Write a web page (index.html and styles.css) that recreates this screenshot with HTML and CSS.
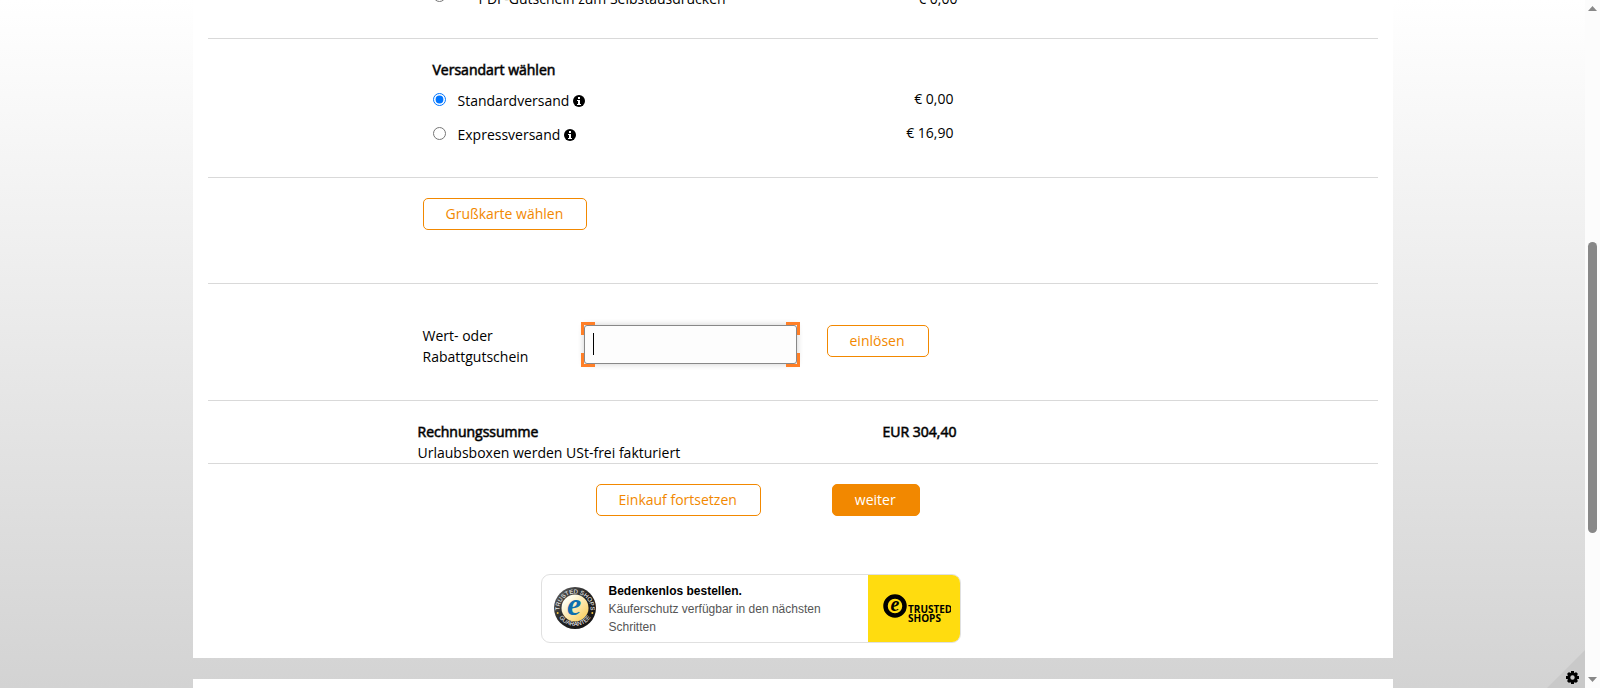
FILE: index.html
```html
<!DOCTYPE html>
<html lang="de">
<head>
  <meta charset="UTF-8">
  <meta name="viewport" content="width=device-width, initial-scale=1.0">
  <title>Warenkorb</title>
  <link rel="stylesheet" href="styles.css">
</head>
<body>
  <div class="window">
    <div class="view">
      <main class="page">
        <section class="section pdf">
          <div class="option indent">
            <input type="radio" id="pdf" name="product">
            <label for="pdf">PDF-Gutschein zum Selbstausdrucken</label>
            <span class="price">€ 0,00</span>
          </div>
        </section>

        <section class="section shipping">
          <h2>Versandart wählen</h2>
          <div class="option">
            <input type="radio" id="standard" name="shipping" checked>
            <label for="standard">Standardversand
              <svg class="info" viewBox="0 0 12 12"><circle cx="6" cy="6" r="6"/><path d="M4 5h3v4h1v1H4V9h1V6H4zM5 2h2v2H5z" fill="#fff"/></svg>
            </label>
            <span class="price">€ 0,00</span>
          </div>
          <div class="option">
            <input type="radio" id="express" name="shipping">
            <label for="express">Expressversand
              <svg class="info" viewBox="0 0 12 12"><circle cx="6" cy="6" r="6"/><path d="M4 5h3v4h1v1H4V9h1V6H4zM5 2h2v2H5z" fill="#fff"/></svg>
            </label>
            <span class="price">€ 16,90</span>
          </div>
        </section>

        <section class="section card">
          <button type="button" class="btn">Grußkarte wählen</button>
        </section>

        <section class="section voucher">
          <label for="code">Wert- oder Rabattgutschein</label>
          <div class="field">
            <input type="text" id="code" autofocus>
            <span class="caret"></span>
            <svg class="corners" viewBox="0 0 219 45" fill="none" stroke="#ff7f27" stroke-width="3"><path d="M1.500 13V1.500H14M205 1.500H217.500V13M1.500 31V43.500H14M205 43.500H217.500V31"/></svg>
          </div>
          <button type="button" class="btn">einlösen</button>
        </section>

        <section class="section total">
          <div>
            <strong>Rechnungssumme</strong>
            <p>Urlaubsboxen werden USt-frei fakturiert</p>
          </div>
          <strong>EUR 304,40</strong>
        </section>

        <div class="actions">
          <button type="button" class="btn">Einkauf fortsetzen</button>
          <button type="submit" class="btn primary">weiter</button>
        </div>

        <div class="trusted">
          <svg class="seal" viewBox="0 0 42 42">
            <defs>
              <linearGradient id="ring" x1="0" y1="0" x2="1" y2="1"><stop offset="0" stop-color="#666"/><stop offset=".5" stop-color="#222"/><stop offset="1" stop-color="#111"/></linearGradient>
              <linearGradient id="gold" x1="0" y1="0" x2="1" y2="1"><stop offset=".2" stop-color="#fffdf0"/><stop offset="1" stop-color="#f8c84a"/></linearGradient>
              <path id="upper" d="M5.800 25A15.500 15.500 0 1 1 36.200 25"/>
              <path id="lower" d="M3.500 27A18.800 18.800 0 0 0 38.500 27"/>
            </defs>
            <circle cx="21" cy="21" r="21" fill="url(#ring)"/>
            <circle cx="21" cy="21" r="13.500" fill="url(#gold)"/>
            <text class="seal-text" text-anchor="middle"><textPath href="#upper" startOffset="50%">TRUSTED SHOPS</textPath></text>
            <text class="seal-text" text-anchor="middle"><textPath href="#lower" startOffset="50%">GUARANTEE</textPath></text>
            <circle cx="3.700" cy="26" r="1" fill="#f3c545"/>
            <circle cx="38.300" cy="26" r="1" fill="#f3c545"/>
            <text class="seal-e" x="20" y="28" text-anchor="middle">e</text>
          </svg>
          <div class="trusted-text">
            <strong>Bedenkenlos bestellen.</strong>
            <p>Käuferschutz verfügbar in den nächsten Schritten</p>
          </div>
          <div class="trusted-logo">
            <svg viewBox="0 0 68 30">
              <circle cx="12" cy="12" r="9.500" fill="none" stroke="#000" stroke-width="4.500"/>
              <text class="logo-e" x="12" y="17" text-anchor="middle">e</text>
              <text class="logo-text" x="25" y="19">TRUSTED</text>
              <text class="logo-text" x="25" y="28">SHOPS</text>
            </svg>
          </div>
        </div>
      </main>
      <footer class="footer"></footer>
      <button type="button" class="settings" aria-label="Einstellungen">
        <svg viewBox="0 0 38 38">
          <path d="M38 0V38H0z" fill="#c9c9c9"/>
          <g transform="translate(25.500 27.500)">
            <circle r="3.700" fill="none" stroke="#000" stroke-width="3"/>
            <path d="M0-6.500V-4M0 6.500V4M-6.500 0H-4M6.500 0H4M-4.500-4.500l1.500 1.500M4.500 4.500L3 3M-4.500 4.500L-3 3M4.500-4.500L3-3" stroke="#000" stroke-width="3"/>
          </g>
        </svg>
      </button>
    </div>
    <div class="scrollbar">
      <svg viewBox="0 0 9 5"><path d="M4.500 0L9 5H0z"/></svg>
      <div class="track"><div class="thumb"></div></div>
      <svg viewBox="0 0 9 5"><path d="M0 0H9L4.500 5z"/></svg>
    </div>
  </div>
</body>
</html>
```
FILE: styles.css
```css
* {
  box-sizing: border-box;
}

body {
  margin: 0;
  font-family: "Open Sans", sans-serif;
  font-size: 14px;
  line-height: 21px;
  color: #000;
}

h2,
p {
  margin: 0;
}

h2 {
  font-size: 14px;
}

h2,
.total strong {
  font-weight: 400;
  -webkit-text-stroke: 1px rgba(0, 0, 0, 0.6);
}

.window {
  display: flex;
  height: 100vh;
  overflow: hidden;
}

.view {
  position: relative;
  flex: 1;
  overflow: hidden;
  background: linear-gradient(#fff, #d3d3d3);
}

/* the view is scrolled down into the order form */
.page {
  max-width: 1200px;
  margin: -12px auto 0;
  padding: 0 15px 15px;
  background: #fff;
}

.section {
  padding-left: 210px;
  border-bottom: 1px solid #d9d9d9;
}

.pdf {
  padding-bottom: 29px;
}

.shipping {
  padding-top: 20px;
  padding-bottom: 21px;
}

.shipping h2 {
  margin-bottom: 8px;
  padding-left: 15px;
}

.option {
  display: flex;
  align-items: flex-start;
  width: 536px;
  height: 34px;
  padding-left: 15px;
}

.option input {
  width: 13px;
  height: 13px;
  margin: 5px 12px 0 0;
}

.option label {
  padding-top: 2px;
}

.option .price {
  margin-left: auto;
}

.indent {
  width: 540px;
  height: 21px;
}

.indent input {
  margin: 1px 33px 0 0;
}

.indent label {
  padding-top: 0;
}

.info {
  width: 12px;
  height: 12px;
  vertical-align: -1px;
}

.btn {
  height: 32px;
  padding: 0 23px 2px 22px;
  border: 1px solid #f28800;
  border-radius: 5px;
  background: #fff;
  color: #f28800;
  font-family: inherit;
  font-size: 14px;
  cursor: pointer;
}

.btn.primary {
  background: #f28800;
  color: #fff;
}

.card {
  padding: 20px 0 53px 215px;
}

.card .btn {
  display: block;
}

.voucher {
  display: flex;
  align-items: flex-start;
  padding: 41px 0 33px 215px;
}

.voucher label {
  width: 161px;
  padding-right: 50px;
}

.field {
  position: relative;
  width: 213px;
  margin-right: 30px;
}

.field input {
  display: block;
  width: 100%;
  height: 39px;
  padding: 0 8px;
  border: 1px solid #888;
  border-radius: 3px;
  outline: none;
  background: #fdfdfd;
  box-shadow: 0 0 6px rgba(0, 0, 0, 0.2);
  caret-color: transparent;
}

.caret {
  position: absolute;
  top: 8px;
  left: 9px;
  width: 1px;
  height: 22px;
  background: #000;
}

.corners {
  position: absolute;
  top: -3px;
  left: -3px;
  width: 219px;
  height: 45px;
  pointer-events: none;
}

.total {
  display: flex;
  justify-content: space-between;
  padding: 20px 421px 0 210px;
}

.actions {
  display: flex;
  gap: 71px;
  padding: 20px 0 58px 388px;
}

.trusted {
  display: flex;
  width: 420px;
  height: 69px;
  margin-left: 333px;
  border: 1px solid #e0e0e0;
  border-radius: 9px;
  overflow: hidden;
  font-family: "Liberation Sans", Arial, sans-serif;
  font-size: 12px;
  line-height: 18px;
}

.seal {
  flex: none;
  width: 42px;
  height: 42px;
  margin: 12px;
}

.seal-text {
  font-size: 6px;
  font-weight: 400;
  fill: #fff;
}

.seal-e {
  font-family: "Liberation Serif", serif;
  font-size: 32px;
  font-style: italic;
  font-weight: 700;
  fill: #0e6fae;
}

.trusted-text {
  flex: 1;
  padding: 7px 30px 0 1px;
  color: #555;
}

.trusted-text strong {
  color: #000;
}

.trusted-logo {
  width: 92px;
  padding: 19px 0 0 15px;
  background: #ffdc0f;
}

.trusted-logo svg {
  width: 68px;
  height: 30px;
}

.logo-e {
  font-family: "Liberation Serif", serif;
  font-size: 20px;
  font-style: italic;
  font-weight: 700;
}

.logo-text {
  font-family: "Open Sans", sans-serif;
  font-size: 10px;
  font-weight: 700;
}

.footer {
  max-width: 1200px;
  height: 100px;
  margin: 21px auto 0;
  background: #fff;
}

.settings {
  position: absolute;
  right: 0;
  bottom: 0;
  width: 38px;
  height: 38px;
  padding: 0;
  border: 0;
  background: none;
}

.settings svg {
  display: block;
}

.scrollbar {
  display: flex;
  flex-direction: column;
  align-items: center;
  width: 15px;
  padding: 6px 0;
  background: #fcfcfc;
}

.scrollbar svg {
  width: 9px;
  height: 5px;
  fill: #888;
}

.track {
  flex: 1;
  padding-top: 231px;
}

.thumb {
  width: 9px;
  height: 291px;
  border-radius: 5px;
  background: #888;
}
```
